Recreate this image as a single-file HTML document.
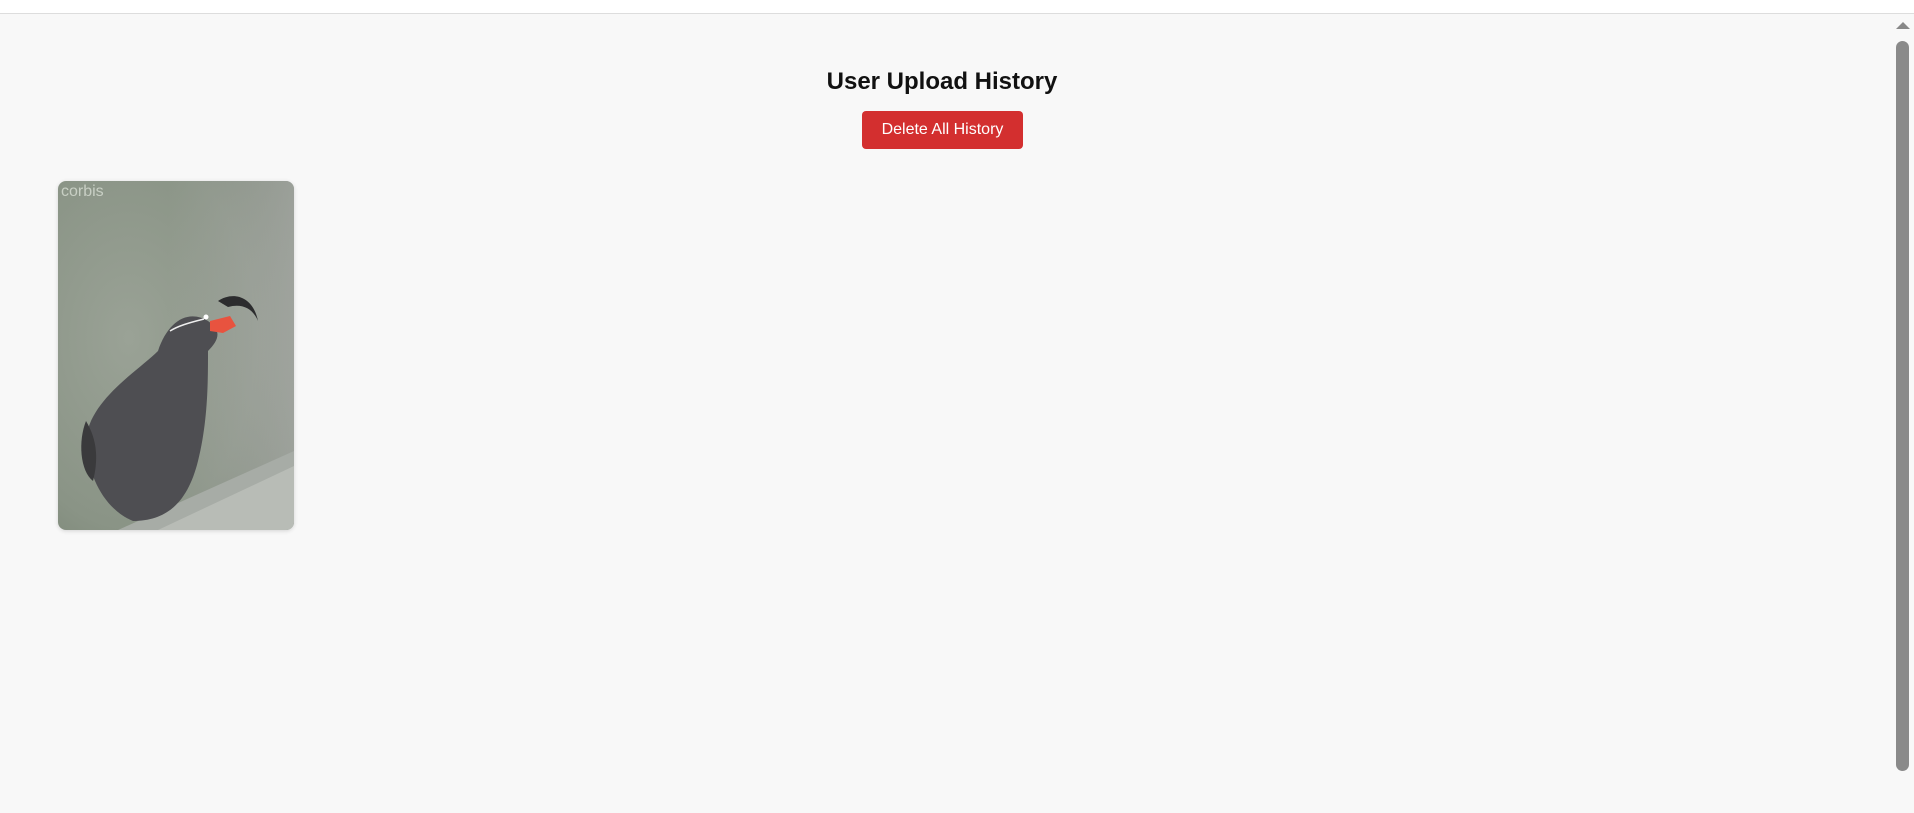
<!DOCTYPE html>
<html><head><style>
body{margin:0;width:1914px;height:813px;background:#f8f8f8;font-family:"Liberation Sans",sans-serif;overflow:hidden;position:relative}
.top{position:absolute;left:0;top:0;width:1914px;height:13px;background:#fff;border-bottom:1px solid #ddd}
h1{position:absolute;top:68px;left:0;width:1884px;text-align:center;margin:0;font-size:24px;font-weight:bold;color:#111}
.btn{position:absolute;left:862px;top:111px;width:161px;height:38px;background:#d32f2f;color:#fff;border-radius:4px;font-size:16px;line-height:38px;text-align:center}
.card{position:absolute;left:58px;top:181px;width:236px;height:349px;border-radius:8px;overflow:hidden;box-shadow:0 1px 4px rgba(0,0,0,.15)}
.thumb{position:absolute;left:1896px;top:41px;width:13px;height:730px;background:#8a8a8a;border-radius:7px}
.arr{position:absolute;left:1896px;top:22px;width:0;height:0;border-left:7px solid transparent;border-right:7px solid transparent;border-bottom:7px solid #888}
</style></head><body>
<div class="top"></div>
<h1>User Upload History</h1>
<div class="btn">Delete All History</div>
<div class="card">
<svg width="236" height="349" viewBox="0 0 236 349">
<defs>
<radialGradient id="bg" cx="0.3" cy="0.45" r="0.9"><stop offset="0" stop-color="#9aa296"/><stop offset="0.6" stop-color="#8a9486"/><stop offset="1" stop-color="#6f7b6a"/></radialGradient>
<linearGradient id="rt" x1="0" x2="1"><stop offset="0" stop-color="#b0b0b0" stop-opacity="0"/><stop offset="1" stop-color="#b5b5b5" stop-opacity="0.6"/></linearGradient>
</defs>
<rect width="236" height="349" fill="url(#bg)"/>
<rect x="110" y="0" width="126" height="349" fill="url(#rt)"/>
<text x="3" y="15" font-size="16" fill="#c8cfc4" font-family="Liberation Sans">corbis</text>
<path d="M60 349 L236 270 L236 349 Z" fill="#a7aca6"/>
<path d="M100 349 L236 285 L236 349Z" fill="#b8bcb6"/>
<path d="M150 140 C130 128 110 140 100 170 C80 190 30 220 28 260 C30 300 50 330 75 340 C110 340 130 320 140 280 C150 240 150 200 150 170 C160 160 165 150 150 140Z" fill="#4e4e52"/>
<path d="M28 240 C20 260 22 290 35 300 C40 280 40 260 28 240Z" fill="#3a3a3c"/>
<path d="M160 120 C175 110 195 115 200 140 C195 128 185 122 170 126Z" fill="#2c2c2e"/>
<path d="M152 140 L172 135 L178 145 L165 152 L152 150Z" fill="#e8533f"/>
<circle cx="148" cy="136" r="2.5" fill="#fff"/>
<path d="M146 138 C130 142 120 145 112 150" stroke="#eee" stroke-width="1.5" fill="none"/>
</svg>
</div>
<div class="arr"></div>
<div class="thumb"></div>
</body></html>
